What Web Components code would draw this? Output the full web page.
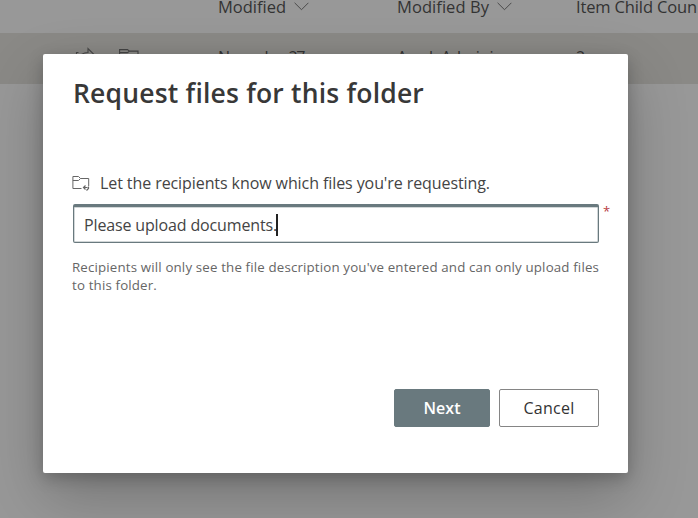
<!DOCTYPE html>
<html lang="en">
<head>
<meta charset="utf-8">
<title>Request files</title>
<style>
html,body{margin:0;height:100%;overflow:hidden}
body{font-family:"Open Sans","Noto Sans",sans-serif;background:#989898;color:#333}
</style>
</head>
<body>
<files-page></files-page>
<script>
const define=(name,markup,extra)=>customElements.define(name,class extends HTMLElement{
  connectedCallback(){
    if(this.shadowRoot)return;
    const t=document.createElement('template');
    t.innerHTML=markup;
    this.attachShadow({mode:'open'}).append(t.content.cloneNode(true));
    if(extra)extra(this);
  }
});

/* A single line of text tracked so that it spans the given width. */
define('tracked-text',`<style>:host{display:inline-block;white-space:nowrap}</style><span><slot></slot></span>`,el=>{
  const span=el.shadowRoot.querySelector('span');
  const gap=Number(el.getAttribute('span'))-span.getBoundingClientRect().width;
  el.style.letterSpacing=(gap/el.textContent.length).toFixed(3)+'px';
});

define('chevron-down',`<style>:host{display:block;width:15px;height:9px}svg{display:block}</style>
<svg width="15" height="9" viewBox="0 0 15 9" fill="none" stroke="#4a4a4a" stroke-width="1"><path d="M.6.8 7.5 7.7 14.4.8"/></svg>`);

define('share-icon',`<style>:host{display:block}svg{display:block}</style>
<svg width="20" height="18" viewBox="0 0 20 18" fill="none" stroke="#484848" stroke-width="1.1"><path d="M3.500 5.500H1.500V17H16V12M4 12C5 8 8 5.500 13 5.500V1.500L19 7.500 13 13V9.500C9 9 6 10 4 12Z"/></svg>`);

define('folder-icon',`<style>:host{display:block}svg{display:block}</style>
<svg width="20" height="18" viewBox="0 0 20 18" fill="none" stroke="#444" stroke-width="1.1"><path d="M.6 17V1.600H8.500L10.500 3.100H19V17M.6 4.600H8.500L10.500 3.100"/></svg>`);

define('folder-request-icon',`<style>:host{display:block;width:18px;height:17px}svg{display:block}</style>
<svg width="18" height="17" viewBox="0 0 18 17" fill="none" stroke="#666" stroke-width="1"><path d="M9.500 13.500H.9V1.500H6.500L8.500 3.500H16.700V11M.9 5.500H6.500L8.500 3.500"/><path d="M13.500 10.500 11.500 12.500 13.500 14.500M11.700 12.500H15.500M16.500 11.500V13.500L14.500 15.500" stroke-width="1.200"/></svg>`);

define('list-header',`<style>
:host{display:grid;grid-template-columns:218px 179px 179px 1fr;height:33px;font-size:16.500px;line-height:14px;color:#333}
div{display:flex;height:14px;gap:8px}
chevron-down{margin-top:2px}
</style>
<div></div>
<div><tracked-text span="68">Modified</tracked-text><chevron-down></chevron-down></div>
<div><tracked-text span="92">Modified By</tracked-text><chevron-down></chevron-down></div>
<div><tracked-text span="121">Item Child Coun</tracked-text></div>`);

define('list-row',`<style>
:host{display:grid;grid-template-columns:75px 44px 99px 179px 179px 1fr;height:51px;background:#8a8986;font-size:16px;line-height:24px;color:#333}
share-icon{margin-top:14px}folder-icon{margin-top:15px}
tracked-text{margin-top:12px}
</style>
<i></i><share-icon></share-icon><folder-icon></folder-icon>
<tracked-text span="86">November 27</tracked-text>
<tracked-text span="104">Arnd. Adminis</tracked-text>
<tracked-text span="9">2</tracked-text>`);

define('dialog-button',`<style>
:host{display:flex;align-items:center;justify-content:center;box-sizing:border-box;height:38px;width:100px;border:1px solid #858585;border-radius:2px;background:#fff;color:#333;font-size:16px;line-height:24px}
:host([primary]){width:96px;background:#69797e;border-color:#69797e;color:#fff;font-weight:600}
</style><slot></slot>`);

define('message-field',`<style>
:host{display:flex;width:540px;padding-left:1px}
.box{box-sizing:border-box;width:526px;height:39px;border:1.500px solid #69797e;border-width:3px 1.500px 1.500px;border-radius:2px;padding-left:10px;display:flex;align-items:center;font-size:16px;line-height:24px;color:#444}
.box{background:#fff;box-shadow:inset 0 0 0 .5px #a5afb2}
.caret{width:2px;height:22px;background:#222;margin-left:-1px}
.star{color:#b83b43;font-size:13px;line-height:18px;margin:-2px 0 0 4px}
</style>
<div class="box"><slot></slot><span class="caret"></span></div><span class="star">*</span>`);

define('request-dialog',`<style>
:host{display:flex;flex-direction:column;box-sizing:border-box;width:585px;height:419px;padding:21px 30px 46px 29px;background:#fff;border-radius:2px;box-shadow:0 24px 60px rgba(0,0,0,.23),0 5px 16px rgba(0,0,0,.22)}
h1{margin:0 0 0 1px;font-size:26.500px;line-height:36px;font-weight:550;color:#383838}
.label{display:flex;height:24px;margin-top:60px;gap:10px;font-size:16px;line-height:24px;color:#444}
folder-request-icon{margin-top:4px}
message-field{margin-top:9px}
p{margin:15px 0 0;display:flex;flex-direction:column;font-size:13.300px;line-height:18px;color:#666}
.actions{display:flex;justify-content:flex-end;gap:9px;margin:auto -1px 0 0}
</style>
<h1><tracked-text span="351">Request files for this folder</tracked-text></h1>
<div class="label"><folder-request-icon></folder-request-icon><tracked-text span="390">Let the recipients know which files you're requesting.</tracked-text></div>
<message-field><tracked-text span="193">Please upload documents.</tracked-text></message-field>
<p><tracked-text span="527">Recipients will only see the file description you've entered and can only upload files</tracked-text><tracked-text span="85">to this folder.</tracked-text></p>
<div class="actions"><dialog-button primary><tracked-text span="37">Next</tracked-text></dialog-button><dialog-button><tracked-text span="51">Cancel</tracked-text></dialog-button></div>`);

define('files-page',`<style>
:host{display:grid;width:698px;height:518px;overflow:hidden;background:#989898}
.list,.overlay{grid-area:1/1;min-width:0}
.overlay{padding:54px 0 0 43px}
</style>
<div class="list"><list-header></list-header><list-row></list-row></div>
<div class="overlay"><request-dialog></request-dialog></div>`);
</script>
</body>
</html>
